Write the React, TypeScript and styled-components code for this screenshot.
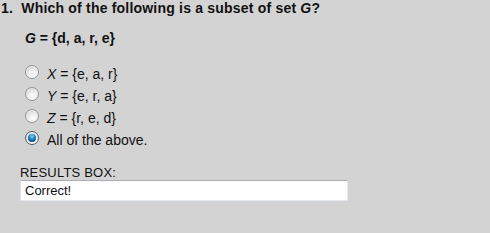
import styled, { createGlobalStyle } from 'styled-components';

const GlobalStyle = createGlobalStyle`
    html, body {
        margin: 0;
        padding: 0;
        background: #d3d3d3;
    }
    body {
        font-family: "Liberation Sans", Arial, sans-serif;
        font-size: 14px;
        color: #111;
    }
`;

const Page = styled.div`
    width: 490px;
    height: 233px;
    background: #d3d3d3;
    padding-left: 1px;
    box-sizing: border-box;
`;

const Question = styled.div`
    font-size: 14px;
    font-weight: bold;
    line-height: 16px;
    white-space: pre;
    letter-spacing: 0.2px;
`;

const SetLine = styled.div`
    margin: 14px 0 0 24px;
    font-weight: bold;
    line-height: 16px;
`;

const Options = styled.div`
    margin: 17px 0 0 24px;
    display: flex;
    flex-direction: column;
`;

const Option = styled.label`
    display: flex;
    align-items: center;
    gap: 8px;
    height: 22px;
    line-height: 16px;
`;

const Radio = styled.span<{ $checked?: boolean }>`
    position: relative;
    flex: none;
    width: 14px;
    height: 14px;
    border-radius: 50%;
    box-sizing: border-box;
    border: 1px solid ${(p) => (p.$checked ? '#4c5965' : '#949494')};
    background: radial-gradient(circle at 60% 70%, #fdfdfd 0%, #eeeeee 40%, #d2d2d2 80%, #c4c4c4 100%);
    box-shadow: inset 0 0 0 1px rgba(255, 255, 255, 0.55);
    margin-top: -5px;

    &::after {
        content: '';
        display: ${(p) => (p.$checked ? 'block' : 'none')};
        position: absolute;
        left: 2px;
        top: 2px;
        width: 8px;
        height: 8px;
        border-radius: 50%;
        background: radial-gradient(circle at 50% 30%, #8adcf9 0%, #2a90cc 35%, #0c4f86 75%, #05304f 100%);
    }
`;

const Results = styled.div`
    margin: 14px 0 0 19px;
    font-size: 13px;
`;

const ResultsLabel = styled.div`
    line-height: 15px;
    letter-spacing: 0.2px;
`;

const ResultsBox = styled.div`
    width: 328px;
    height: 21px;
    box-sizing: border-box;
    background: #fff;
    border: 1px solid #e3e9ef;
    border-top-color: #abadb3;
    border-left-color: #e2e3ea;
    padding: 2px 4px;
    line-height: 15px;
`;

const options = [
    { name: 'X', set: '{e, a, r}' },
    { name: 'Y', set: '{e, r, a}' },
    { name: 'Z', set: '{r, e, d}' },
];

const App = () => {
    return (
        <Page>
            <GlobalStyle />
            <Question>
                1.  Which of the following is a subset of set <i>G</i>?
            </Question>
            <SetLine>
                <i>G</i> = {'{d, a, r, e}'}
            </SetLine>
            <Options>
                {options.map((o) => (
                    <Option key={o.name}>
                        <Radio />
                        <span>
                            <i>{o.name}</i> = {o.set}
                        </span>
                    </Option>
                ))}
                <Option>
                    <Radio $checked />
                    <span>All of the above.</span>
                </Option>
            </Options>
            <Results>
                <ResultsLabel>RESULTS BOX:</ResultsLabel>
                <ResultsBox>Correct!</ResultsBox>
            </Results>
        </Page>
    );
};

export default App;
